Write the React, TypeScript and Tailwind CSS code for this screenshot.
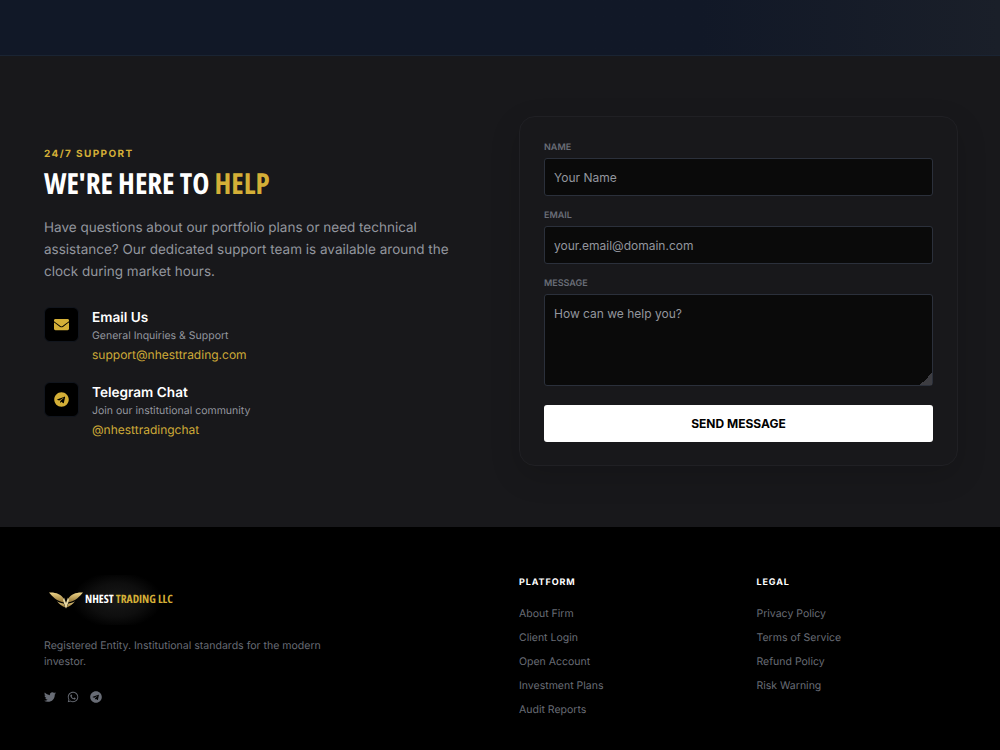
import { FaEnvelope, FaTelegram, FaTwitter, FaWhatsapp } from "react-icons/fa";

const inter = "font-['Inter',sans-serif]";

function Field({ label, placeholder }: { label: string; placeholder: string }) {
  return (
    <div>
      <label className="block pt-[1px] text-[9px] leading-[14px] font-semibold uppercase text-[#6a6e78] mb-[3px]">{label}</label>
      <input
        placeholder={placeholder}
        className="block w-full h-[38px] px-[9px] bg-[#0a0a0a] border border-[#2b303b] rounded-[3px] text-[12px] text-[#93969e] placeholder:text-[#93969e] outline-none"
      />
    </div>
  );
}

function Contact({ icon, title, sub, link }: { icon: React.ReactNode; title: string; sub: string; link: string }) {
  return (
    <div className="flex gap-[13px]">
      <div className="w-[35px] h-[35px] shrink-0 rounded-md bg-black border border-[#11151d] flex items-center justify-center text-[#d4af37] text-[15px]">
        {icon}
      </div>
      <div>
        <div className="mt-[1px] text-[13.6px] leading-[20px] font-semibold text-white">{title}</div>
        <div className="text-[10.5px] leading-[16px] text-[#93969e]">{sub}</div>
        <div className="text-[12px] leading-[18px] text-[#cfab38] mt-[2px]">{link}</div>
      </div>
    </div>
  );
}

function Wings() {
  const wing = (
    <>
      <path d="M0 0.6 C6 0 11.5 2 14.6 6.4 L15.8 10.4 C12 10.2 8 8.4 5.6 6.2 C3.6 4.6 1.6 2.6 0 0.6 Z" fill="url(#nhestGold)" />
      <path d="M8 9.2 C10 10.6 12.4 11.4 14.6 11.4 L16.4 15.6 C13.2 14.4 10 12 8 9.2 Z" fill="url(#nhestGold)" />
    </>
  );
  return (
    <svg width="34" height="17" viewBox="0 0 34 17" className="shrink-0">
      <defs>
        <linearGradient id="nhestGold" x1="0" y1="0" x2="0" y2="1">
          <stop offset="0" stopColor="#f0d68a" />
          <stop offset="1" stopColor="#8f7130" />
        </linearGradient>
      </defs>
      {wing}
      <g transform="matrix(-1 0 0 1 34 0)">{wing}</g>
      <path d="M15 5.5 L17 11 L19 5.5 L20 8 L17.8 15 L17 16.6 L16.2 15 L14 8 Z" fill="#e8d9a4" />
    </svg>
  );
}

function FooterCol({ title, items }: { title: string; items: string[] }) {
  return (
    <div>
      <div className="mt-[2px] text-[9px] leading-[12px] font-bold tracking-[0.9px] uppercase text-white mb-[17px]">{title}</div>
      <ul className="flex flex-col gap-[8px]">
        {items.map((t) => (
          <li key={t} className="text-[10.5px] leading-[16px] text-[#686c75]">{t}</li>
        ))}
      </ul>
    </div>
  );
}

export default function App() {
  return (
    <div className={`${inter} [text-rendering:geometricPrecision] w-full min-h-[750px] bg-black`}>
      <div className="h-[56px] border-b border-[#1a2433] bg-gradient-to-r from-[#111827] from-70% to-[#1a1f29]" />

      <section className="bg-[#18181b] pl-[44px] pr-[42px] pt-[60px] pb-[61px] grid grid-cols-[438px_1fr] gap-[37px] items-start">
        <div className="pt-[31px]">
          <div className="text-[10px] leading-[14px] font-bold tracking-[1.4px] uppercase text-[#d4af37]">24/7 Support</div>
          <h2 className="mt-[3px] text-[29px] leading-[40px] font-bold text-white uppercase font-['Open_Sans',sans-serif] [font-stretch:75%]">
            We're here to <span className="text-[#d4af37]">Help</span>
          </h2>
          <p className="mt-[13px] text-[13.5px] leading-[22px] text-[#93969e]">
            Have questions about our portfolio plans or need technical assistance? Our dedicated support team is available around the clock during market hours.
          </p>
          <div className="mt-[24px] flex flex-col gap-[18px]">
            <Contact icon={<FaEnvelope />} title="Email Us" sub="General Inquiries & Support" link="support@nhesttrading.com" />
            <Contact icon={<FaTelegram />} title="Telegram Chat" sub="Join our institutional community" link="@nhesttradingchat" />
          </div>
        </div>

        <div className="h-[350px] bg-[#18181b] border border-[#202024] rounded-2xl px-6 pt-[23px] shadow-[0_10px_30px_rgba(0,0,0,0.15)]">
          <div className="flex flex-col gap-[12px]">
            <Field label="Name" placeholder="Your Name" />
            <Field label="Email" placeholder="your.email@domain.com" />
            <div>
              <label className="block pt-[1px] text-[9px] leading-[14px] font-semibold uppercase text-[#6a6e78] mb-[3px]">Message</label>
              <textarea
                placeholder="How can we help you?"
                className="[&::-webkit-resizer]:bg-[linear-gradient(135deg,transparent_60%,#3d3d42_60%)] block w-full h-[92px] px-[9px] py-[10px] bg-[#0a0a0a] border border-[#2b303b] rounded-[3px] text-[12px] leading-[17px] text-[#93969e] placeholder:text-[#93969e] outline-none"
              />
            </div>
          </div>
          <button className="mt-[19px] w-full h-[37px] bg-white rounded-[3px] text-[12px] font-bold uppercase text-black">Send Message</button>
        </div>
      </section>

      <footer className="bg-black h-[223px] pl-[44px] pr-[43px] pt-[48px] grid grid-cols-4 gap-[37px]">
        <div className="col-span-2">
          <div className="w-[135px] h-[50px] bg-[radial-gradient(ellipse_45px_28px_at_68px_25px,#181818_0%,#0e0e0e_60%,#000_100%)] flex items-center gap-[2px] ml-[5px] whitespace-nowrap">
            <Wings />
            <span className="text-[11.5px] font-bold font-['Open_Sans',sans-serif] [font-stretch:75%] text-white">NHEST <span className="text-[#d4af37]">TRADING LLC</span></span>
          </div>
          <p className="mt-[13px] w-[290px] text-[10.56px] leading-[16px] text-[#686c75]">
            Registered Entity. Institutional standards for the modern investor.
          </p>
          <div className="mt-[21px] flex items-center gap-[11px] text-[12px] text-[#686c75]">
            <FaTwitter />
            <FaWhatsapp />
            <FaTelegram />
          </div>
        </div>
        <FooterCol title="Platform" items={["About Firm", "Client Login", "Open Account", "Investment Plans", "Audit Reports"]} />
        <FooterCol title="Legal" items={["Privacy Policy", "Terms of Service", "Refund Policy", "Risk Warning"]} />
      </footer>
    </div>
  );
}
